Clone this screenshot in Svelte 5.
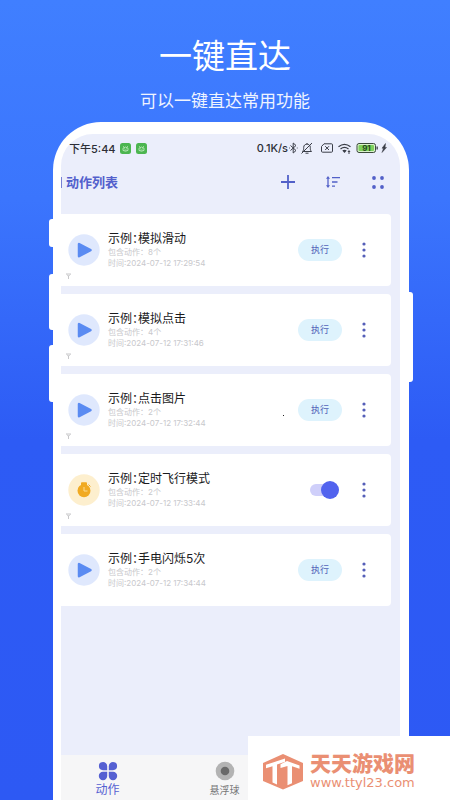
<script>
  let items = $state([
    { title: '示例：模拟滑动', count: 8, time: '2024-07-12 17:29:54', kind: 'play', mark: true },
    { title: '示例：模拟点击', count: 4, time: '2024-07-12 17:31:46', kind: 'play', mark: true },
    { title: '示例：点击图片', count: 2, time: '2024-07-12 17:32:44', kind: 'play', mark: true, speck: true },
    { title: '示例：定时飞行模式', count: 2, time: '2024-07-12 17:33:44', kind: 'timer', mark: true, on: true },
    { title: '示例：手电闪烁5次', count: 2, time: '2024-07-12 17:34:44', kind: 'play' }
  ]);
</script>

<main class="stage" lang="zh-CN">
  <header class="hero">
    <h1>一键直达</h1>
    <p>可以一键直达常用功能</p>
  </header>

  <div class="phone">
    <i class="key k1"></i><i class="key k2"></i><i class="key k3"></i><i class="key k4"></i>
    <div class="screen">
      <div class="status">
        <span class="clock">下午5:44</span>
        {#each [0, 1] as n (n)}
          <svg class="badge" width="11" height="11" viewBox="0 0 11 11" aria-hidden="true">
            <rect width="11" height="11" rx="2.5" fill="#4cb550" />
            <path d="M3 3.2l.9.8M8 3.2l-.9.8M3 5.2Q5.5 2.8 8 5.2V7.4Q5.5 9 3 7.4z" fill="none" stroke="#c8efc5" stroke-width=".8" />
            <path d="M4.4 5.4h.6M6 5.4h.6M4.4 7h2.2" stroke="#c8efc5" stroke-width=".7" />
          </svg>
        {/each}
        <span class="speed">0.1K/s</span>
        <svg width="112" height="14" viewBox="0 0 112 14" class="sys" aria-hidden="true">
          <g fill="none" stroke="#3a3d47" stroke-width="1">
            <path d="M2.500 4.500l5.500 5L5.200 12V2L8 4.500l-5.500 5M1 7h.8M8.800 7h.8" />
            <path d="M14.500 10.500h9c-1.200-1.200-1.200-2-1.200-4.200 0-4.200-6.600-4.200-6.600 0 0 2.200 0 3-1.200 4.200zM17.500 12.200h3M19 2v1M24 2L13.500 12.500" />
            <path d="M36 2.800h7.500q1 0 1 1v6.400q0 1-1 1h-9q-1 0-1-1V5.500zM37.200 5.200l3.800 3.800M41 5.200L37.200 9" />
            <path d="M50.500 5.800q6-5 12 0M52.500 8q4-3.300 8 0" stroke-width="1.200" />
            <rect x="69" y="2.500" width="18.500" height="9" rx="2" fill="#d9f2cc" stroke="#3b4a3b" />
          </g>
          <path d="M54.300 9.600q2.200-1.700 4.400 0l-2.200 2.400zM61 9l1.500 2h-1v2h-1v-2h-1zM88.500 5.500h1.300v3h-1.300z" fill="#3a3d47" />
          <rect x="70.500" y="4" width="15.500" height="6" rx="1" fill="#7fd05c" />
          <text x="78.500" y="10" text-anchor="middle" font-size="8" font-weight="700" fill="#26471f">91</text>
          <path d="M97.500 2.500L94 7.200h1.500L94 11.500l4.500-5H97z" fill="#3a3d47" stroke="#3a3d47" stroke-width=".5" />
        </svg>
      </div>

      <div class="bar">
        <i class="edge"></i>
        <h2>动作列表</h2>
        <button aria-label="添加"><svg width="20" height="20" viewBox="0 0 20 20"><path d="M10 3v14M3 10h14" stroke="#5260c8" stroke-width="1.800" /></svg></button>
        <button aria-label="排序"><svg width="20" height="20" viewBox="0 0 20 20"><path d="M5 6v8M9 5.700h8M9 10h5.500M9 14.200h3" stroke="#5260c8" stroke-width="1.300" fill="none" /><path d="M5 4l2 2.800H3zM5 16l2-2.800H3z" fill="#5260c8" /></svg></button>
        <button aria-label="更多"><svg width="20" height="20" viewBox="0 0 20 20" fill="#5260c8"><circle cx="6" cy="6" r="1.900" /><circle cx="14" cy="6" r="1.900" /><circle cx="6" cy="15" r="1.900" /><circle cx="14" cy="15" r="1.900" /></svg></button>
      </div>

      <ul class="list">
        {#each items as item (item.title)}
          <li class="card">
            {#if item.kind === 'timer'}
              <svg width="32" height="32" viewBox="0 0 32 32" aria-hidden="true">
                <circle cx="16" cy="16" r="15.700" fill="#fdefce" />
                <circle cx="16" cy="16.700" r="6.500" fill="#f1aa22" />
                <path d="M13.500 8.800h5v2.500h-5zM20.500 10.500l2 2" fill="#f1aa22" stroke="#f1aa22" />
                <path d="M16 13v4h3.500" fill="none" stroke="#fbdc94" stroke-width="1" />
              </svg>
            {:else}
              <svg width="32" height="32" viewBox="0 0 32 32" aria-hidden="true">
                <circle cx="16" cy="16" r="15.700" fill="#dfe8fd" />
                <path d="M11 10v12.200L22.500 16.100z" fill="#5a8bf2" stroke="#5a8bf2" stroke-width="2.500" stroke-linejoin="round" />
              </svg>
            {/if}
            <div class="info">
              <h3>{item.title}</h3>
              <p>包含动作：{item.count}个</p>
              <p>时间:{item.time}</p>
            </div>
            {#if item.kind === 'timer'}
              <input class="switch" type="checkbox" aria-label={item.title} bind:checked={item.on} />
            {:else}
              <button class="run">执行</button>
            {/if}
            <button class="more" aria-label="菜单">
              <svg width="12" height="20" viewBox="0 0 12 20" fill="#555fb8"><circle cx="6" cy="4" r="1.600" /><circle cx="6" cy="10" r="1.600" /><circle cx="6" cy="16" r="1.600" /></svg>
            </button>
            {#if item.mark}
              <svg class="mark" width="5" height="6" viewBox="0 0 5 6" aria-hidden="true"><path d="M0 1h5M.8 1.500L2.500 3.200 4.200 1.500M2.500 2.500V6" fill="none" stroke="#c2c2c4" stroke-width=".9" /></svg>
            {/if}
            {#if item.speck}<i class="speck"></i>{/if}
          </li>
        {/each}
      </ul>

      <nav class="tabs">
        <a class="active" href="#actions">
          <svg width="20" height="20" viewBox="0 0 20 20" fill="#5560d2" aria-hidden="true">
            <path d="M5 1a4.200 4.200 0 0 1 4.200 4.200v4H5A4.100 4.100 0 0 1 5 1zM15 1a4.100 4.100 0 0 1 0 8.200h-4.200v-4A4.200 4.200 0 0 1 15 1zM5 10.800h4.200V15A4.200 4.200 0 1 1 5 10.800zM10.800 10.800H15A4.200 4.200 0 1 1 10.800 15z" />
          </svg>
          <span>动作</span>
        </a>
        <a href="#ball">
          <svg width="20" height="20" viewBox="0 0 20 20" aria-hidden="true"><circle cx="10" cy="10" r="9.300" fill="#b3b3b3" /><circle cx="10" cy="10" r="4.300" fill="#696969" /></svg>
          <span>悬浮球</span>
        </a>
      </nav>
    </div>
  </div>

  <aside class="site">
    <svg width="40" height="36" viewBox="0 0 40 36" aria-hidden="true">
      <path d="M20 0L40 9v18L20 35.500 0 27V9z" fill="#ea8f73" />
      <path d="M3 10.800L22 4.500v3.300L14 10.600V30.500l-4.500-2V12.200L3 14.300z" fill="#fff" />
      <path d="M17.500 10.200L24 7l12.500 4.500v3.300L29 12.300v17l-4.500 2V12l-7 2z" fill="#fff" />
    </svg>
    <div>
      <strong>天天游戏网</strong>
      <span>www.ttyl23.com</span>
    </div>
  </aside>
</main>

<style>
  :global(body) { margin: 0; }
  .stage, .stage * { box-sizing: border-box; }
  .stage {
    position: relative;
    display: flex;
    flex-direction: column;
    height: 100vh;
    overflow: hidden;
    background: linear-gradient(#407fff 0%, #3b75fd 25%, #2d5bf5 55%, #2d59f4 100%);
    font-family: Inter, "Noto Sans CJK SC", sans-serif;
  }
  h1, h2, h3, p, ul { margin: 0; padding: 0; font-weight: 400; }
  button { border: 0; padding: 0; background: none; font-family: inherit; cursor: pointer; }
  svg { display: block; flex: none; }
  .hero { height: 122px; flex: none; padding-top: 32px; text-align: center; color: #fff; }
  .hero h1 { font-size: 33px; line-height: 48px; }
  .hero p { margin-top: 8px; font-size: 17px; line-height: 26px; color: #eff4ff; }
  .phone {
    position: relative;
    flex: 1;
    display: flex;
    min-height: 0;
    margin: 0 41px 0 53px;
    padding: 12px 9px 0 8px;
    background: #fff;
    border-radius: 48px 48px 0 0;
  }
  .key { position: absolute; left: -4px; width: 5px; background: #fff; border-radius: 3px 0 0 3px; }
  .k1 { top: 97px; height: 28px; }
  .k2 { top: 152px; height: 56px; }
  .k3 { top: 223px; height: 57px; }
  .k4 { top: 170px; height: 90px; left: auto; right: -4px; border-radius: 0 3px 3px 0; }
  .screen {
    position: relative;
    flex: 1;
    min-width: 0;
    display: flex;
    flex-direction: column;
    overflow: hidden;
    background: #ebeefb;
    border-radius: 32px 32px 0 0;
  }
  .status { display: flex; align-items: center; height: 28px; flex: none; padding-left: 8px; color: #2c2e36; font-weight: 500; }
  .clock { font-size: 11px; margin-right: 4px; }
  .badge { margin-right: 5px; }
  .speed { margin-left: auto; font-size: 11px; }
  .bar { display: flex; align-items: center; gap: 25px; height: 40px; flex: none; padding: 0 12px 0 5px; position: relative; }
  .edge { position: absolute; left: 0; top: 15px; width: 1px; height: 11px; background: #7780d4; }
  .bar h2 { flex: 1; font-size: 13px; font-weight: 700; line-height: 20px; color: #5360cc; }
  .list { flex: 1; min-height: 0; display: flex; flex-direction: column; gap: 8px; margin: 12px 9px 0 0; list-style: none; }
  .card {
    position: relative;
    display: flex;
    align-items: center;
    height: 72px;
    flex: none;
    padding: 0 21px 0 7px;
    background: #fff;
    border-radius: 0 4px 4px 0;
  }
  .info { flex: 1; margin-left: 8px; }
  .info h3 { font-size: 12px; line-height: 16px; color: #1a1a1c; font-feature-settings: "palt"; }
  .info p { font-size: 8px; line-height: 11px; color: #c8c8cc; white-space: nowrap; }
  .run { width: 44px; height: 22px; border-radius: 11px; background: #def3fd; color: #5362b8; font-size: 9px; line-height: 22px; }
  .more { margin-left: 16px; }
  .switch {
    appearance: none;
    width: 29px;
    height: 18px;
    margin: 0 3px 0 0;
    position: relative;
  }
  .switch::before {
    content: "";
    position: absolute;
    left: 0;
    top: 3px;
    width: 25px;
    height: 12px;
    border-radius: 6px;
    background: #cfcffa;
  }
  .switch::after {
    content: "";
    position: absolute;
    left: 0;
    top: 0;
    width: 18px;
    height: 18px;
    border-radius: 50%;
    background: #a5a8c4;
  }
  .switch:checked::after { left: auto; right: 0; background: #5263ee; }
  .mark { position: absolute; left: 5px; bottom: 7px; }
  .speck { position: absolute; right: 107px; top: 41px; width: 1px; height: 1px; background: #222; }
  .tabs {
    display: grid;
    grid-template-columns: repeat(3, 1fr);
    height: 45px;
    flex: none;
    margin-left: -12px;
    padding-top: 6px;
    background: #f6f6f7;
  }
  .tabs a { display: flex; flex-direction: column; align-items: center; color: #777; font-size: 10px; line-height: 18px; text-decoration: none; }
  .tabs .active { color: #5560d2; font-size: 12px; }
  .site {
    position: absolute;
    right: 0;
    bottom: 0;
    display: flex;
    align-items: center;
    gap: 7px;
    width: 202px;
    height: 64px;
    padding: 8px 0 0 15px;
    background: #fff;
    color: #ea8f73;
  }
  .site strong { display: block; font-size: 21px; line-height: 22px; font-weight: 900; }
  .site span { display: block; font: 13px/16px "DejaVu Sans", sans-serif; }
</style>
